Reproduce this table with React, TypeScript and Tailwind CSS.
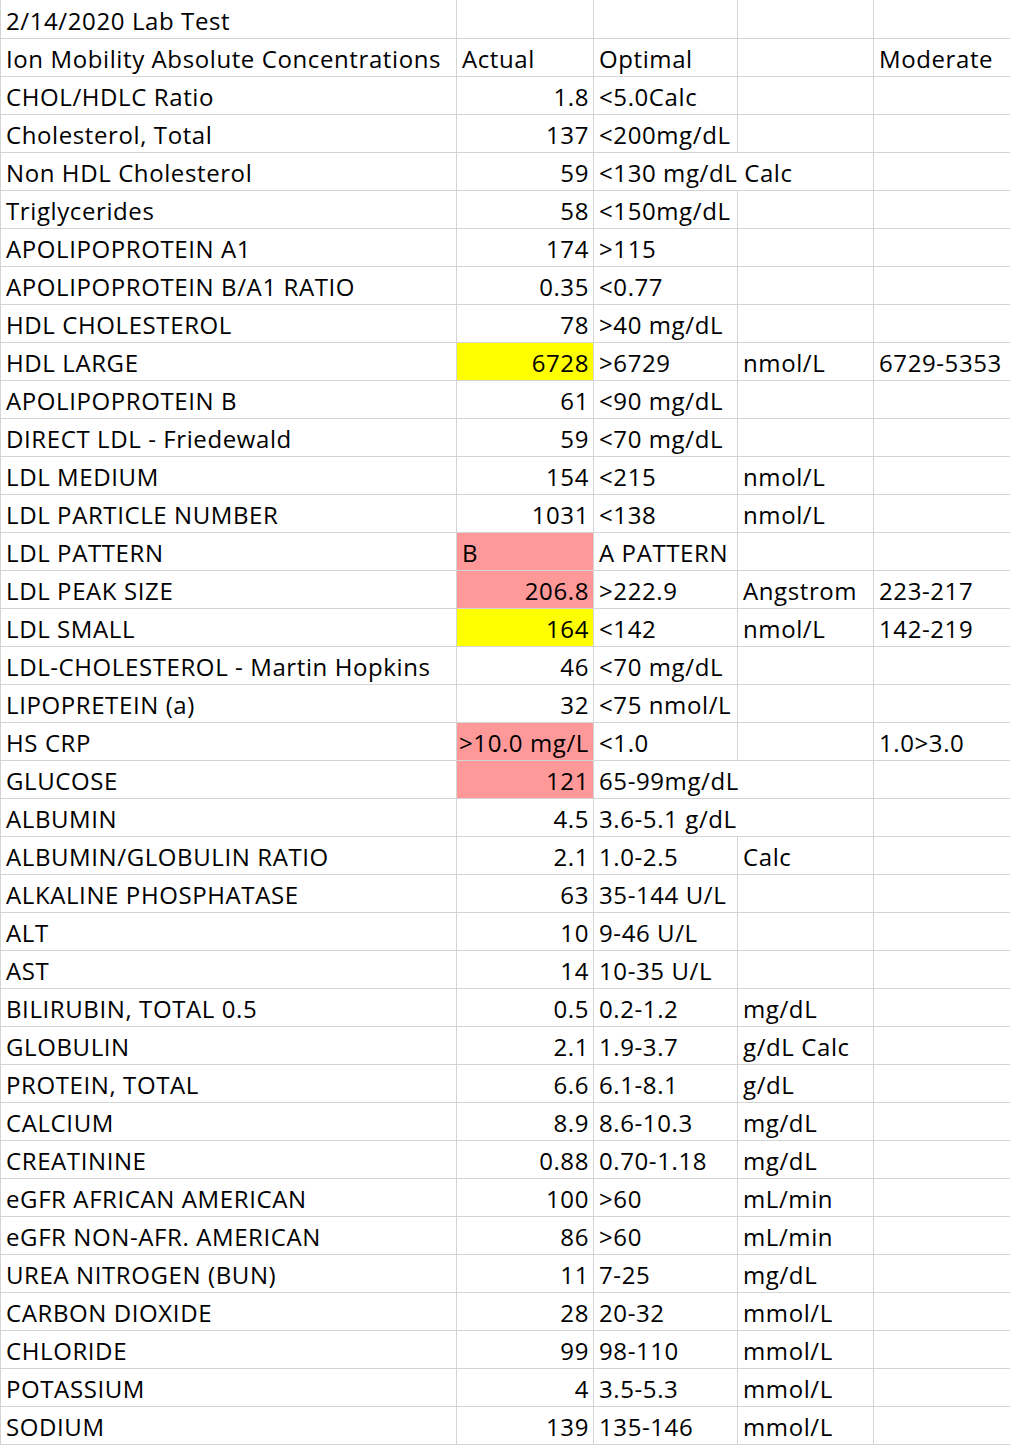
type Cell = {
  t?: string
  right?: boolean
  bg?: "yellow" | "pink"
  span?: boolean
}

// one row per line of the sheet: name, actual, optimal, unit, moderate
const rows: Cell[][] = [
  [{ t: "2/14/2020 Lab Test" }, {}, {}, {}, {}],
  [{ t: "Ion Mobility Absolute Concentrations" }, { t: "Actual" }, { t: "Optimal" }, {}, { t: "Moderate" }],
  [{ t: "CHOL/HDLC Ratio" }, { t: "1.8", right: true }, { t: "<5.0Calc" }, {}, {}],
  [{ t: "Cholesterol, Total" }, { t: "137", right: true }, { t: "<200mg/dL" }, {}, {}],
  [{ t: "Non HDL Cholesterol" }, { t: "59", right: true }, { t: "<130 mg/dL Calc", span: true }, {}],
  [{ t: "Triglycerides" }, { t: "58", right: true }, { t: "<150mg/dL" }, {}, {}],
  [{ t: "APOLIPOPROTEIN A1" }, { t: "174", right: true }, { t: ">115" }, {}, {}],
  [{ t: "APOLIPOPROTEIN B/A1 RATIO" }, { t: "0.35", right: true }, { t: "<0.77" }, {}, {}],
  [{ t: "HDL CHOLESTEROL" }, { t: "78", right: true }, { t: ">40 mg/dL" }, {}, {}],
  [{ t: "HDL LARGE" }, { t: "6728", right: true, bg: "yellow" }, { t: ">6729" }, { t: "nmol/L" }, { t: "6729-5353" }],
  [{ t: "APOLIPOPROTEIN B" }, { t: "61", right: true }, { t: "<90 mg/dL" }, {}, {}],
  [{ t: "DIRECT LDL - Friedewald" }, { t: "59", right: true }, { t: "<70 mg/dL" }, {}, {}],
  [{ t: "LDL MEDIUM" }, { t: "154", right: true }, { t: "<215" }, { t: "nmol/L" }, {}],
  [{ t: "LDL PARTICLE NUMBER" }, { t: "1031", right: true }, { t: "<138" }, { t: "nmol/L" }, {}],
  [{ t: "LDL PATTERN" }, { t: "B", bg: "pink" }, { t: "A PATTERN" }, {}, {}],
  [{ t: "LDL PEAK SIZE" }, { t: "206.8", right: true, bg: "pink" }, { t: ">222.9" }, { t: "Angstrom" }, { t: "223-217" }],
  [{ t: "LDL SMALL" }, { t: "164", right: true, bg: "yellow" }, { t: "<142" }, { t: "nmol/L" }, { t: "142-219" }],
  [{ t: "LDL-CHOLESTEROL - Martin Hopkins" }, { t: "46", right: true }, { t: "<70 mg/dL" }, {}, {}],
  [{ t: "LIPOPRETEIN (a)" }, { t: "32", right: true }, { t: "<75 nmol/L" }, {}, {}],
  [{ t: "HS CRP" }, { t: ">10.0 mg/L", right: true, bg: "pink" }, { t: "<1.0" }, {}, { t: "1.0>3.0" }],
  [{ t: "GLUCOSE" }, { t: "121", right: true, bg: "pink" }, { t: "65-99mg/dL", span: true }, {}],
  [{ t: "ALBUMIN" }, { t: "4.5", right: true }, { t: "3.6-5.1 g/dL", span: true }, {}],
  [{ t: "ALBUMIN/GLOBULIN RATIO" }, { t: "2.1", right: true }, { t: "1.0-2.5" }, { t: "Calc" }, {}],
  [{ t: "ALKALINE PHOSPHATASE" }, { t: "63", right: true }, { t: "35-144 U/L" }, {}, {}],
  [{ t: "ALT" }, { t: "10", right: true }, { t: "9-46 U/L" }, {}, {}],
  [{ t: "AST" }, { t: "14", right: true }, { t: "10-35 U/L" }, {}, {}],
  [{ t: "BILIRUBIN, TOTAL 0.5" }, { t: "0.5", right: true }, { t: "0.2-1.2" }, { t: "mg/dL" }, {}],
  [{ t: "GLOBULIN" }, { t: "2.1", right: true }, { t: "1.9-3.7" }, { t: "g/dL Calc" }, {}],
  [{ t: "PROTEIN, TOTAL" }, { t: "6.6", right: true }, { t: "6.1-8.1" }, { t: "g/dL" }, {}],
  [{ t: "CALCIUM" }, { t: "8.9", right: true }, { t: "8.6-10.3" }, { t: "mg/dL" }, {}],
  [{ t: "CREATININE" }, { t: "0.88", right: true }, { t: "0.70-1.18" }, { t: "mg/dL" }, {}],
  [{ t: "eGFR AFRICAN AMERICAN" }, { t: "100", right: true }, { t: ">60" }, { t: "mL/min" }, {}],
  [{ t: "eGFR NON-AFR. AMERICAN" }, { t: "86", right: true }, { t: ">60" }, { t: "mL/min" }, {}],
  [{ t: "UREA NITROGEN (BUN)" }, { t: "11", right: true }, { t: "7-25" }, { t: "mg/dL" }, {}],
  [{ t: "CARBON DIOXIDE" }, { t: "28", right: true }, { t: "20-32" }, { t: "mmol/L" }, {}],
  [{ t: "CHLORIDE" }, { t: "99", right: true }, { t: "98-110" }, { t: "mmol/L" }, {}],
  [{ t: "POTASSIUM" }, { t: "4", right: true }, { t: "3.5-5.3" }, { t: "mmol/L" }, {}],
  [{ t: "SODIUM" }, { t: "139", right: true }, { t: "135-146" }, { t: "mmol/L" }, {}],
]

function SheetCell({ cell }: { cell: Cell }) {
  const bg =
    cell.bg === "yellow" ? "bg-[#ffff00]" : cell.bg === "pink" ? "bg-[#ff9999]" : "bg-white"
  return (
    <div
      className={`${bg} ${cell.span ? "col-span-2" : ""} ${
        cell.right ? "justify-end" : "justify-start"
      } flex items-end overflow-hidden whitespace-nowrap pl-[5px] pr-[4px] pb-[5px] text-[24px] leading-none tracking-[0.6px] text-black`}
    >
      {cell.t}
    </div>
  )
}

export default function App() {
  return (
    <div
      className="w-[1010px] bg-white"
      style={{ fontFamily: "'Open Sans', Lato, sans-serif" }}
    >
      <div className="grid grid-cols-[455px_136px_143px_135px_136px] grid-rows-[38px_repeat(37,37px)] gap-px bg-[#d4d4d4] pl-px pb-px">
        {rows.map((row, i) => row.map((cell, j) => <SheetCell key={`${i}-${j}`} cell={cell} />))}
      </div>
    </div>
  )
}
